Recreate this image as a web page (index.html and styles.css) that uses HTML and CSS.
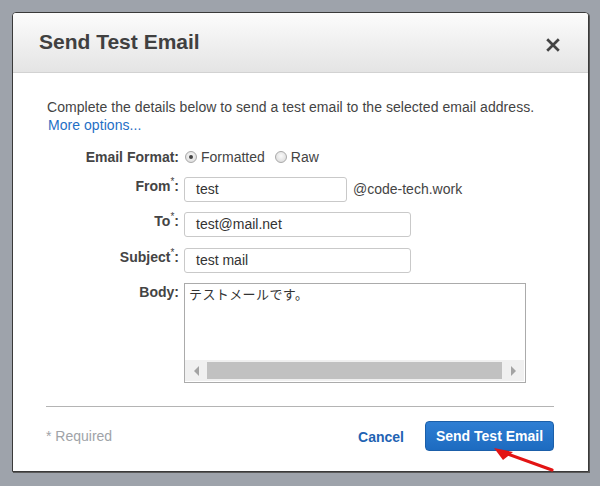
FILE: index.html
```html
<!DOCTYPE html>
<html>
<head>
<meta charset="utf-8">
<link rel="stylesheet" href="styles.css">
</head>
<body>
<div class="dialog">
  <div class="header">
    <h1 class="title">Send Test Email</h1>
    <svg class="close" width="14" height="14" viewBox="0 0 14 14"><path d="M1.2 1.2 L12.8 12.8 M12.8 1.2 L1.2 12.8" stroke="#444" stroke-width="2.7" stroke-linecap="butt"/></svg>
  </div>
  <div class="content">
    <p class="intro">Complete the details below to send a test email to the selected email address.<br><a class="more">More options...</a></p>
    <div class="form">
      <div class="label center">Email Format:</div>
      <div class="radios">
        <span class="radio checked"></span><span class="rlabel">Formatted</span>
        <span class="radio"></span><span class="rlabel">Raw</span>
      </div>

      <div class="label">From<sup>*</sup>:</div>
      <div class="ctrl"><div class="input short">test</div><span class="domain">@code-tech.work</span></div>

      <div class="label">To<sup>*</sup>:</div>
      <div class="ctrl"><div class="input">test@mail.net</div></div>

      <div class="label">Subject<sup>*</sup>:</div>
      <div class="ctrl"><div class="input">test mail</div></div>

      <div class="label">Body:</div>
      <div class="ctrl">
        <div class="textarea">
          <div class="tatext">テストメールです。</div>
          <div class="hscroll">
            <span class="arrow left"></span>
            <span class="thumb"></span>
            <span class="arrow right"></span>
          </div>
        </div>
      </div>
    </div>
  </div>
  <div class="footer">
    <div class="sep"></div>
    <div class="actions">
      <span class="required">* Required</span>
      <span class="spacer"></span>
      <a class="cancel">Cancel</a>
      <span class="btn">Send Test Email</span>
    </div>
  </div>
  <svg class="pointer" width="70" height="34" viewBox="0 0 70 34">
    <line x1="68" y1="32" x2="18" y2="14" stroke="#e31414" stroke-width="3.2" stroke-linecap="round"/>
    <polygon points="10,10 19,22 29,14" fill="#e31414"/>
  </svg>
</div>
</body>
</html>
```

FILE: styles.css
```css
html, body {
  margin: 0;
  padding: 0;
}
body {
  background: #9ea3ab;
  width: 600px;
  height: 486px;
  overflow: hidden;
  font-family: "Liberation Sans", Arial, sans-serif;
  font-size: 14px;
  color: #444;
}
.dialog {
  position: relative;
  box-sizing: border-box;
  width: 577px;
  height: 460px;
  margin: 12px 0 0 12px;
  background: #fff;
  border: 1px solid #3a3a3a;
  border-radius: 4px 4px 0 0;
  box-shadow: 1px 1px 0 #5a5a5a;
  display: flex;
  flex-direction: column;
}
.header {
  box-sizing: border-box;
  height: 60px;
  display: flex;
  align-items: center;
  justify-content: space-between;
  padding: 0 28px 2px 26px;
  background: linear-gradient(#fcfcfc, #e4e4e4);
  border-bottom: 1px solid #d2d2d2;
  border-radius: 3px 3px 0 0;
}
.title {
  margin: 0;
  font-size: 21px;
  font-weight: bold;
  color: #404040;
  line-height: 24px;
}
.close {
  display: block;
  margin-top: 6px;
}
.content {
  padding: 25px 34px 0 34px;
}
.intro {
  margin: 0;
  line-height: 18px;
  font-size: 14px;
  letter-spacing: 0.05px;
  color: #444;
}
.more {
  color: #1f6fc5;
  margin-left: 1px;
}
.form {
  display: grid;
  grid-template-columns: 132px auto;
  column-gap: 5px;
  row-gap: 10.5px;
  margin-top: 13px;
  align-items: start;
}
.label {
  text-align: right;
  font-weight: bold;
  line-height: 16px;
  padding-top: 1px;
  color: #444;
  white-space: nowrap;
}
.label.center {
  padding-top: 0;
  align-self: center;
}
.label sup {
  font-size: 10px;
  font-weight: normal;
  vertical-align: top;
  line-height: 10px;
  position: relative;
  top: -1px;
}
.radios {
  display: flex;
  align-items: center;
  height: 19px;
}
.radio {
  box-sizing: border-box;
  width: 12px;
  height: 12px;
  border-radius: 50%;
  border: 1px solid #a9a9a9;
  background: radial-gradient(circle at 50% 40%, #fafafa, #d6d6d6);
  margin-left: 1px;
  margin-right: 4px;
  display: flex;
  align-items: center;
  justify-content: center;
}
.radio.checked::after {
  content: "";
  width: 4px;
  height: 4px;
  border-radius: 50%;
  background: #444;
}
.rlabel {
  margin-right: 9px;
}
.ctrl {
  display: flex;
  align-items: center;
}
.input {
  box-sizing: border-box;
  width: 227px;
  height: 25px;
  border: 1px solid #c9c9c9;
  border-radius: 3px;
  padding: 0 11px;
  line-height: 23px;
  color: #333;
  background: #fff;
}
.input.short {
  width: 163px;
}
.domain {
  margin-left: 6px;
  color: #444;
}
.textarea {
  box-sizing: border-box;
  width: 342px;
  height: 100px;
  border: 1px solid #ababab;
  display: flex;
  flex-direction: column;
  background: #fff;
}
.tatext {
  flex: 1;
  padding: 1px 4px;
  font-family: "Noto Sans CJK JP", sans-serif;
  font-size: 13px;
  letter-spacing: 0.4px;
  line-height: 18px;
  color: #333;
}
.hscroll {
  height: 21px;
  background: #f0f0f0;
  display: flex;
  align-items: stretch;
  margin: 0 1px 1px 0;
}
.arrow {
  width: 22px;
  display: flex;
  align-items: center;
  justify-content: center;
}
.arrow.left::before {
  content: "";
  border-right: 5px solid #a3a3a3;
  border-top: 5px solid transparent;
  border-bottom: 5px solid transparent;
}
.arrow.right::before {
  content: "";
  border-left: 5px solid #a3a3a3;
  border-top: 5px solid transparent;
  border-bottom: 5px solid transparent;
}
.thumb {
  flex: 1;
  background: #c1c1c1;
  margin: 2px 0;
}
.footer {
  padding: 0 34px 0 33px;
}
.sep {
  height: 1px;
  background: #b4b4b4;
  margin-top: 23px;
}
.actions {
  display: flex;
  align-items: center;
  margin-top: 14px;
}
.required {
  color: #a0a3a8;
}
.spacer {
  flex: 1;
}
.cancel {
  color: #1f63b3;
  font-weight: bold;
  margin-right: 21px;
  margin-top: 1px;
}
.btn {
  box-sizing: border-box;
  height: 30px;
  width: 129px;
  display: flex;
  align-items: center;
  justify-content: center;
  background: linear-gradient(#2e7ed3, #1d6bc0);
  border: 1px solid #1b5fa9;
  border-radius: 4px;
  color: #fff;
  font-weight: bold;
}
.pointer {
  position: absolute;
  left: 471px;
  top: 425px;
}
```
